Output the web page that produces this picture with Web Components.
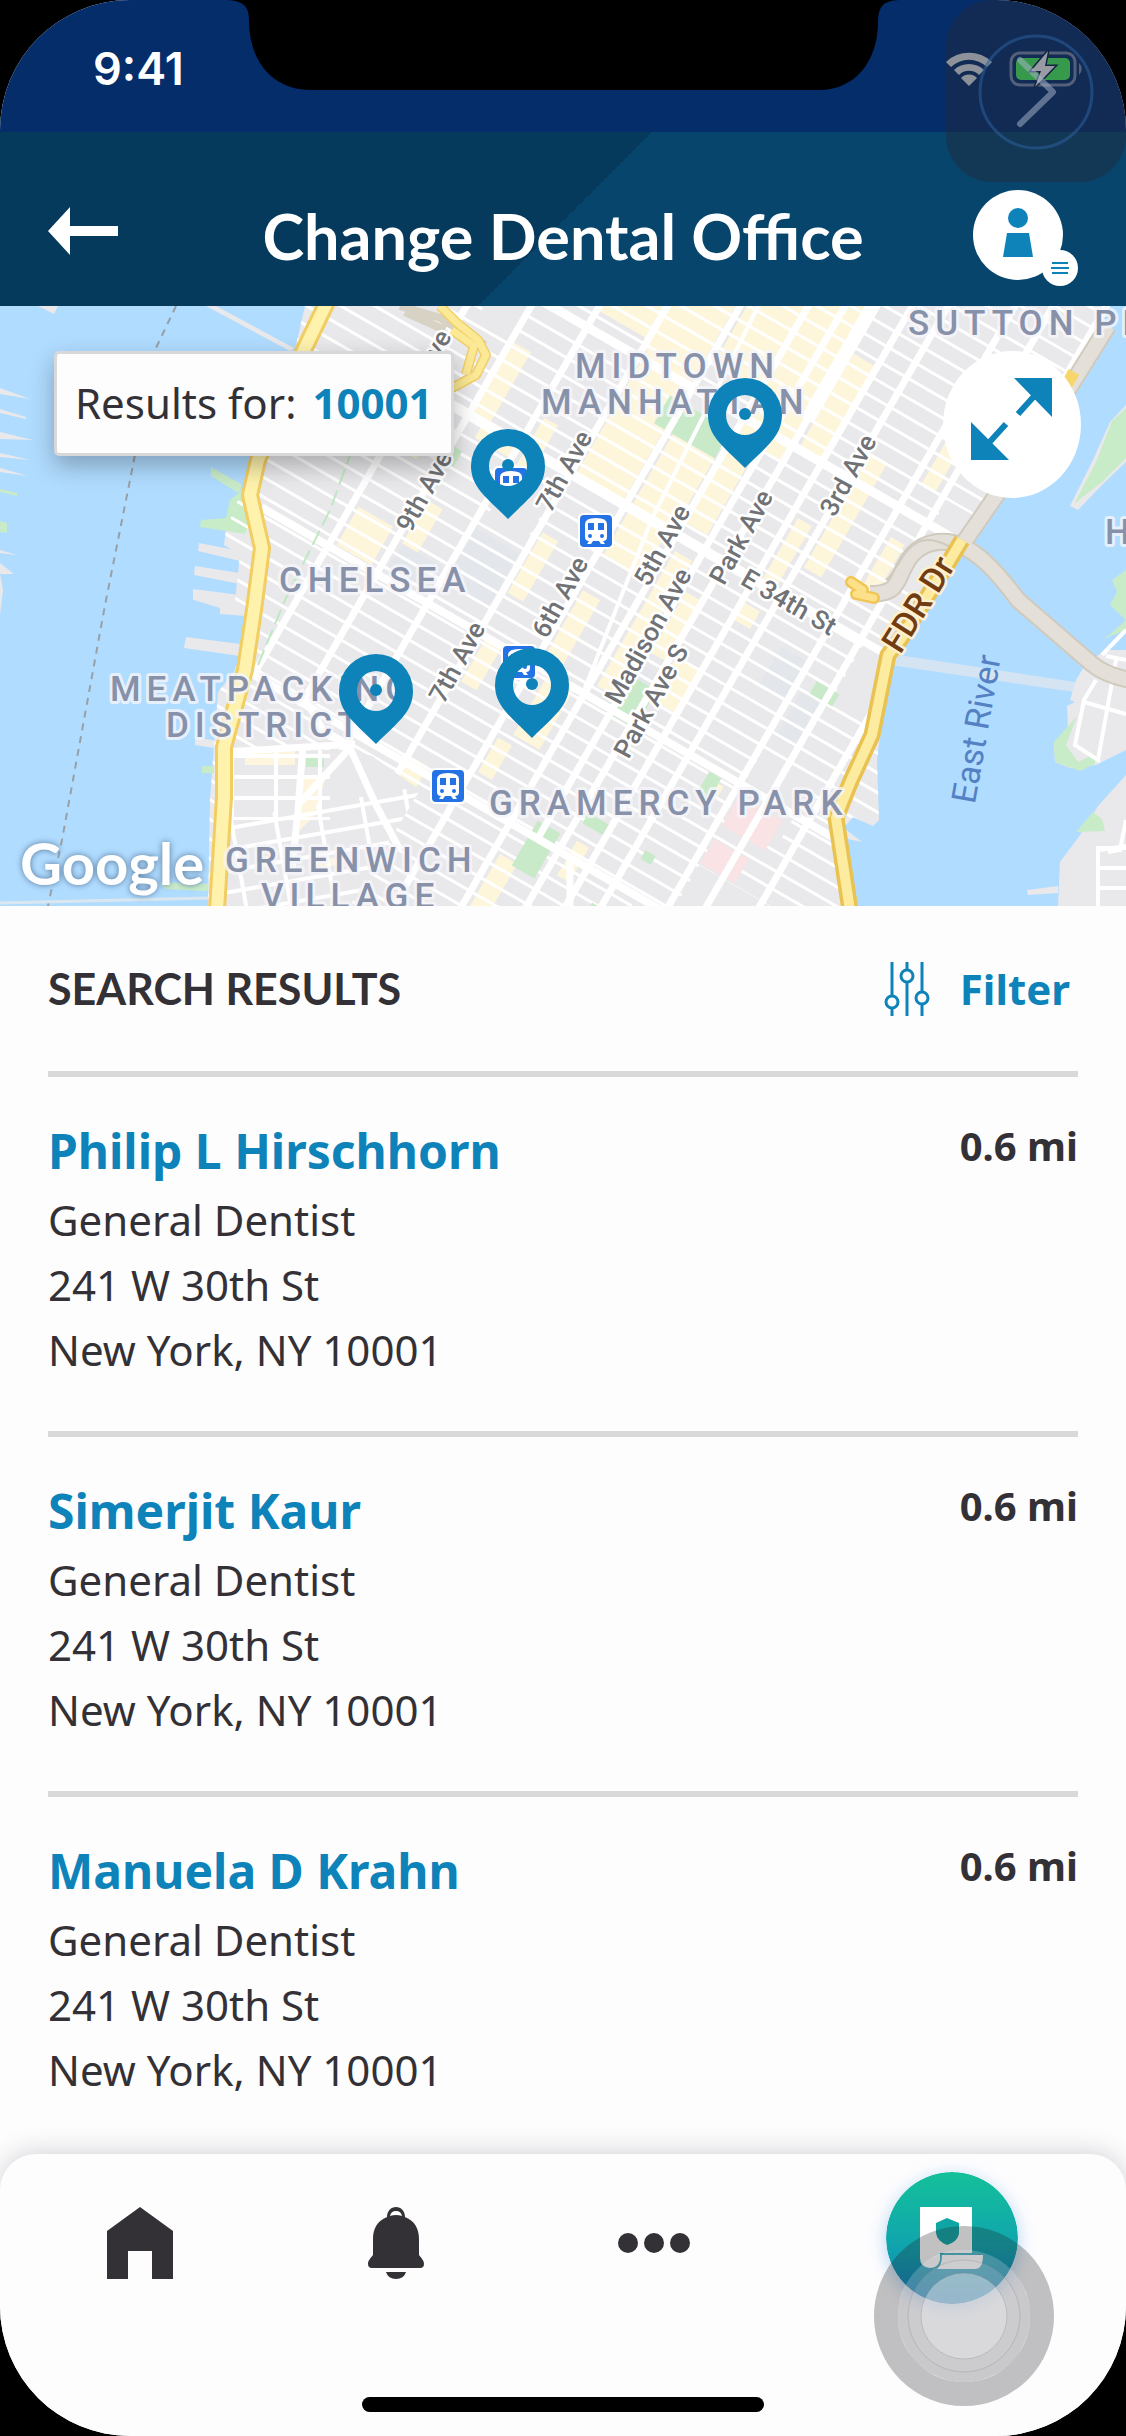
<!DOCTYPE html>
<html lang="en">
<head>
<meta charset="utf-8">
<meta name="viewport" content="width=device-width, initial-scale=1">
<title>Change Dental Office</title>
<style>
  html, body { margin: 0; background: #000; }
  body { font-family: "Noto Sans", "Open Sans", sans-serif; color: #333135; }
</style>
</head>
<body>
<dental-app>
  <status-bar slot="top" time="9:41"></status-bar>
  <page-header slot="top">Change Dental Office</page-header>
  <office-map slot="top" zip="10001"></office-map>
  <results-list>
    <span slot="title">SEARCH RESULTS</span>
    <dentist-item distance="0.6 mi"><span slot="name">Philip L Hirschhorn</span><span slot="role">General Dentist</span><span slot="street">241 W 30th St</span><span slot="city">New York, NY 10001</span></dentist-item>
    <dentist-item distance="0.6 mi"><span slot="name">Simerjit Kaur</span><span slot="role">General Dentist</span><span slot="street">241 W 30th St</span><span slot="city">New York, NY 10001</span></dentist-item>
    <dentist-item distance="0.6 mi"><span slot="name">Manuela D Krahn</span><span slot="role">General Dentist</span><span slot="street">241 W 30th St</span><span slot="city">New York, NY 10001</span></dentist-item>
  </results-list>
  <tab-bar slot="bottom"></tab-bar>
</dental-app>
<script>
const define = (name, render) => customElements.define(name, class extends HTMLElement {
  constructor() {
    super();
    this.attachShadow({ mode: 'open' }).innerHTML = render(this);
  }
});

define('dental-app', () => `
<style>
  :host { display: flex; flex-direction: column; position: relative; min-height: 100vh; background: #fefdfe; border-radius: 130px; overflow: hidden; }
  main { flex: 1; }
  .assist { position: absolute; top: 0; right: 0; width: 180px; height: 182px; }
</style>
<slot name="top"></slot>
<main><slot></slot></main>
<slot name="bottom"></slot>
<svg class="assist" viewBox="0 0 180 182" aria-hidden="true">
  <rect width="180" height="182" rx="46" fill="#222a38" fill-opacity=".44"/>
  <circle cx="90" cy="92" r="56" fill="none" stroke="#2c5f9a" stroke-opacity=".55" stroke-width="3"/>
  <path d="M74 60L107 92L74 124" fill="none" stroke="#a9b4cb" stroke-opacity=".52" stroke-width="6" stroke-linecap="round" stroke-linejoin="round"/>
</svg>`);

define('status-bar', el => `
<style>
  :host { display: flex; justify-content: space-between; align-items: flex-start; position: relative; height: 132px; background: #042d6a; color: #fff; font: 600 45px/56px Inter, sans-serif; }
  time { padding: 41px 0 0 93px; }
  .notch { position: absolute; left: 50%; top: 0; width: 672px; height: 90px; transform: translateX(-50%); }
  .signals { padding: 50px 40px 0 0; }
</style>
<time>${el.getAttribute('time')}</time>
<svg class="notch" viewBox="0 0 672 90" aria-hidden="true"><path d="M0 0C16 1 22 6 22 20C22 62 46 90 84 90H592C628 90 650 62 651 24C651 6 656 1 672 0Z"/></svg>
<svg class="signals" width="140" height="38" viewBox="0 0 140 38" aria-hidden="true">
  <g fill="#dfe3e6"><path d="M0 12A33 33 0 0 1 46 12L41 17A26 26 0 0 0 5 17Z"/><path d="M8 20A22 22 0 0 1 38 20L33 25A14 14 0 0 0 13 25Z"/><path d="M15 28A11 11 0 0 1 31 28L23 36Z"/></g>
  <rect x="65" y="3" width="64" height="32" rx="9" fill="none" stroke="#7b8cab" stroke-width="3"/>
  <path d="M133 13a8 8 0 0 1 0 12z" fill="#7b8cab"/>
  <rect x="70" y="8" width="54" height="22" rx="5" fill="#48f05a"/>
  <path d="M102 1L85 21H95L89 37L109 16H99Z" fill="#f4f4f4" stroke="#04204f" stroke-width="3" paint-order="stroke"/>
</svg>`);

define('page-header', () => `
<style>
  :host { display: grid; grid-template-columns: 118px 1fr 118px; align-items: center; height: 174px; box-sizing: border-box; padding: 0 48px; background: linear-gradient(135deg, transparent 0 50%, #07456c 50%) 479px 0 / 172px 174px no-repeat, linear-gradient(90deg, #053a5c 0 650px, #07456c 650px); color: #fff; }
  h1 { margin: 0; padding-top: 34px; text-align: center; font: 700 63px/72px Lato, sans-serif; white-space: nowrap; }
  button { border: 0; padding: 0; background: none; color: inherit; display: block; }
  .back { margin-top: 23px; }
  .profile { justify-self: end; margin-top: 38px; }
  svg { display: block; }
</style>
<button class="back" aria-label="Back"><svg width="70" height="48" viewBox="0 0 70 48"><path d="M0 24L22 0V19H70V29H22V48Z" fill="#fff"/></svg></button>
<h1><slot></slot></h1>
<button class="profile" aria-label="Profile menu"><svg width="105" height="96" viewBox="0 0 105 96">
  <circle cx="45" cy="45" r="45" fill="#fff"/><circle cx="87" cy="78" r="18" fill="#fff"/>
  <circle cx="45" cy="28" r="10" fill="#0d83b9"/><path d="M34 43H56L60 67H30Z" fill="#0d83b9"/>
  <path d="M79 73H95M78 78H96M79 83H95" stroke="#0d83b9" stroke-width="2"/>
</svg></button>`);

const avenues = [257, 313, 372, 431, 494, 553, 585, 609, 643, 674, 732, 765, 811]
  .map(u => `<path d="M${u} -900V-62"/>`).join('');
const lowerAvenues = [372, 431, 494, 553, 609, 643, 674, 732]
  .map(u => `<path d="M${u} -70V200"/>`).join('');
const shop = [[430,-640,60,100],[500,-700,52,140],[556,-700,50,190],[436,-540,54,150],[500,-480,48,90],[372,-620,56,70],[556,-500,24,90],[500,-400,44,60],[616,-640,26,110],[680,-560,20,130],[650,-470,16,70],[740,-500,16,60],[740,-660,16,100],[316,-480,20,80],[330,-400,40,22],[262,-400,28,70],[320,-300,18,60],[264,-260,40,44],[380,-430,16,60],[436,-330,18,70],[500,-300,20,80],[560,-380,20,150],[512,-210,30,70],[440,-210,18,50],[560,-240,30,16],[500,-130,16,40],[590,-350,20,70],[614,-290,26,50],[646,-370,18,20],[620,-80,14,40],[560,-30,20,60],[434,-70,20,40],[700,-200,20,14]]
  .map(([x, y, w, h]) => `<rect x="${x}" y="${y}" width="${w}" height="${h}"/>`).join('');
const crossStreets = Array.from({ length: 66 }, (_, i) => `<path d="M100 ${-901 + i * 17}H1100"/>`).join('');
const pin = (x, y) => `<g transform="translate(${x} ${y})" fill="#0d83b9"><path fill-rule="evenodd" d="M0 0A37 37 0 0 1 37 37C37 58 22 68 0 90C-22 68 -37 58 -37 37A37 37 0 0 1 0 0ZM0 17A19 20 0 1 0 0 57A19 20 0 1 0 0 17Z"/><circle cy="36" r="6"/></g>`;
const train = (x, y) => `<g transform="translate(${x} ${y})"><rect x="-18" y="-18" width="36" height="36" rx="5" fill="#fff"/><rect x="-16" y="-16" width="32" height="32" rx="4" fill="#2472e4"/><path d="M-11 -7Q-11 -13 0 -13Q11 -13 11 -7V6Q11 10 7 10L9 13H5L3 10H-3L-5 13H-9L-7 10Q-11 10 -11 6Z" fill="#fff"/><path d="M-8 -8H-2V-1H-8ZM2 -8H8V-1H2Z" fill="#2472e4"/><circle cx="-6" cy="5" r="2" fill="#2472e4"/><circle cx="6" cy="5" r="2" fill="#2472e4"/></g>`;
const road = (x, y, a, t) => `<text transform="translate(${x} ${y}) rotate(${a})" dy="9">${t}</text>`;

define('office-map', el => `
<style>
  :host { display: block; position: relative; height: 600px; overflow: hidden; }
  .map { display: block; width: 100%; height: 100%; }
  .area { font: 500 35px Roboto, sans-serif; letter-spacing: 6px; fill: #8791a9; stroke: #f6f6fb; stroke-opacity: .8; stroke-width: 6px; stroke-linejoin: round; paint-order: stroke; }
  .road { font: 500 26px Roboto, sans-serif; fill: #707276; text-anchor: middle; stroke: #fff; stroke-width: 5px; stroke-linejoin: round; paint-order: stroke; }
  .logo { font: 700 58px Lato, sans-serif; fill: #fff; filter: drop-shadow(0 0 3px #56779a); }
  .query { position: absolute; left: 54px; top: 45px; display: flex; gap: 16px; box-sizing: border-box; height: 105px; padding: 19px 18px 20px; border: 3px solid #d8d7d9; border-radius: 5px; background: #fefdfe; box-shadow: 0 10px 24px rgba(0,0,0,.28); font-size: 42px; line-height: 60px; white-space: nowrap; }
  .query strong { color: #0d83b9; }
  button { position: absolute; right: 45px; top: 45px; width: 138px; height: 147px; padding: 0; border: 0; border-radius: 50%; background: #fff; }
  button svg { display: block; }
</style>
<svg class="map" viewBox="0 306 1126 600" preserveAspectRatio="xMidYMid slice" role="img" aria-label="Map of dental offices near ${el.getAttribute('zip')}">
  <defs>
    <clipPath id="land"><path d="M305 306L296 345L250 460L244 492L238 500L226 530L224 545L240 555L234 610L246 617L242 650L234 672L218 692L214 745L210 800L208 906H858L842 830L853 817L873 826L879 820L877 760L888 672L897 655L930 600L962 545L1000 490L1073 385L1110 306Z"/></clipPath>
    <clipPath id="village"><path d="M225 750H350L372 756L420 790L350 906H205L220 800Z"/></clipPath>
    <pattern id="lanes" width="44" height="21" patternUnits="userSpaceOnUse"><path d="M0 2H44M2 0V21" stroke="#fff" stroke-width="4"/></pattern>
  </defs>
  <rect y="306" width="1126" height="600" fill="#b0dcff"/>
  <g fill="#e9e8eb">
    <path d="M305 306L296 345L250 460L244 492L238 500L226 530L224 545L240 555L234 610L246 617L242 650L234 672L218 692L214 745L210 800L208 906H858L842 830L853 817L873 826L879 820L877 760L888 672L897 655L930 600L962 545L1000 490L1073 385L1110 306Z"/>
    <path d="M199 543L240 551V561L198 551ZM195 566L240 573V584L194 575ZM193 589L240 595V606L193 600ZM194 600L246 602V616L220 614V608ZM186 637L240 644V656L184 648ZM195 738L214 740V748L195 745ZM844 828L862 842L843 838Z"/>
    <path d="M0 388L30 399L0 394ZM0 409L26 417V419L0 413ZM0 432L33 440L0 439ZM0 453L30 460L0 457ZM0 468L28 476L0 472ZM0 550L17 555L0 553ZM0 563L14 574H0ZM0 574L3 590L0 615ZM38 306H58L54 314Z"/>
    <path d="M206 306H216L294 348L290 351Z"/>
    <path d="M1126 650H1105L1085 665L1076 680L1070 700L1075 702L1067 706L1068 730L1054 745L1055 762L1070 768L1096 765L1126 750ZM1126 775L1098 806L1080 835L1060 862L1058 906H1126ZM1058 886L1027 890L1028 895L1058 893Z"/>
    <path d="M1126 405L1110 422L1092 462L1070 506L1078 510L1103 484L1126 462Z"/>
    <path d="M892 654L1075 682L1074 692L890 665Z" opacity=".65"/>
  </g>
  <g fill="#c9ecc8">
    <path d="M211 467L241 484L240 494L211 476ZM242 490L230 500L226 518L201 520L200 527L245 534L250 520ZM0 489L17 493V496L0 492ZM0 521L7 523V533L0 532ZM202 766H214V773H202ZM160 882L210 884L207 891L165 889Z"/>
    <path d="M1126 408L1112 421L1096 462L1074 504L1103 481L1126 458ZM1126 570L1112 580L1117 592L1110 605L1126 620L1108 636L1100 640L1126 630ZM1077 716L1054 742L1055 762L1080 771L1095 764V754L1078 762L1066 745ZM1093 812L1076 832L1105 831L1102 819Z"/>
  </g>
  <g fill="none" stroke="#fff" stroke-width="4"><path d="M1126 660L1106 656M1126 630L1102 655M1096 680L1084 700L1075 745L1098 760L1116 660M1084 702L1126 714M1126 848H1098V906M1100 868H1126M1100 888H1126M1100 850L1126 846M1126 820L1120 850L1108 852"/></g>
  <g clip-path="url(#land)">
    <g transform="translate(0 600) rotate(30)">
      <g fill="#fef6db">${shop}</g>
      <g fill="#e3e6ea"><rect x="740" y="-320" width="24" height="50"/><rect x="592" y="-265" width="18" height="40"/><rect x="700" y="-350" width="30" height="45"/><rect x="320" y="-250" width="50" height="30"/><rect x="376" y="-300" width="50" height="60"/></g>
      <g stroke="#fff" stroke-width="3">${crossStreets}</g>
      <g fill="#e9e8eb"><rect x="272" y="-560" width="38" height="70"/><rect x="380" y="-360" width="46" height="44"/><rect x="770" y="-400" width="60" height="70"/><rect x="736" y="-240" width="60" height="60"/><rect x="770" y="-560" width="60" height="90"/><rect x="738" y="-120" width="150" height="46"/><rect x="700" y="-56" width="170" height="160"/></g>
      <g fill="#f9e3e5"><rect x="738" y="-200" width="50" height="34"/><rect x="738" y="-150" width="40" height="28"/><rect x="694" y="-6" width="24" height="14"/></g>
      <g fill="#c9eac9"><rect x="478" y="-512" width="70" height="32"/><rect x="290" y="-360" width="36" height="18"/><rect x="588" y="-250" width="26" height="44"/><rect x="700" y="-206" width="14" height="26"/><rect x="616" y="-110" width="24" height="12"/><rect x="748" y="-338" width="26" height="14"/><rect x="576" y="-78" width="26" height="52"/><rect x="664" y="-34" width="12" height="28"/><rect x="680" y="-32" width="14" height="30"/><rect x="684" y="-106" width="12" height="10"/></g>
      <g fill="none" stroke="#fff" stroke-width="7">${avenues}${lowerAvenues}
        <path d="M260 -530H900" stroke-width="9"/><path d="M200 -396H960" stroke-width="8"/><path d="M180 -211H900" stroke-width="8"/><path d="M250 -62H900" stroke-width="8"/>
        <path d="M609 -900V-560" stroke-width="14"/><path d="M494 -900L524 -396L553 -200" stroke-width="4"/></g>
    </g>
    <path d="M225 750H350L372 756L420 790L350 906H205L220 800Z" fill="#e9e8eb"/>
    <path d="M245 748H295V765H245ZM298 774L325 780L315 815L300 830ZM305 855L350 860L320 870Z" fill="#fdf5dd"/>
    <path d="M306 754H324V767H306Z" fill="#c9eac9"/>
    <g clip-path="url(#village)"><g transform="translate(230 754)"><rect x="-30" y="-10" width="130" height="76" fill="url(#lanes)"/></g><g transform="translate(230 826) rotate(-10)"><rect x="-40" y="-6" width="240" height="100" fill="url(#lanes)"/></g></g>
    <g fill="none" stroke="#fff" stroke-width="7"><path d="M303 745L298 810L292 870M350 748L298 805M350 748L376 805L400 850M225 752L355 744M570 860V906M352 745L326 735L300 690"/></g>
    <path d="M258 665L285 600L330 510L352 450" fill="none" stroke="#bfe9c0" stroke-width="2" stroke-dasharray="16 6"/>
  </g>
  <path d="M400 306L440 318L485 345M405 312L445 330" fill="none" stroke="#d8d2c4" stroke-width="8"/>
  <g fill="none" stroke-linejoin="round">
    <path d="M440 306L456 322L478 340L486 355L476 375L452 388M452 330L474 346L466 374" stroke="#f2cf68" stroke-width="10"/><path d="M440 306L456 322L478 340L486 355L476 375L452 388M452 330L474 346L466 374" stroke="#fbe995" stroke-width="7"/>
    <path d="M328 300L303 352L258 460L250 495L262 548L254 610L245 670L224 747V797L217 910" stroke="#f1cd62" stroke-width="18"/><path d="M328 300L303 352L258 460L250 495L262 548L254 610L245 670L224 747V797L217 910" stroke="#fef2ad" stroke-width="12"/>
    <path d="M1108 326L1068 390L1000 490L960 548M870 594C900 594 896 580 906 564C914 548 930 540 948 542C976 546 1000 576 1018 600L1092 664Q1105 675 1130 680" stroke="#d0cabd" stroke-width="18"/><path d="M1108 326L1068 390L1000 490L960 548M870 594C900 594 896 580 906 564C914 548 930 540 948 542C976 546 1000 576 1018 600L1092 664Q1105 675 1130 680" stroke="#e4e0d9" stroke-width="14"/>
    <path d="M886 580C898 570 902 550 918 542Q932 536 952 548" stroke="#d0cabd" stroke-width="2"/>
    <path d="M962 540L950 560L900 640L888 655L872 735L850 783L836 818L850 910" stroke="#e9c252" stroke-width="17"/><path d="M962 540L950 560L900 640L888 655L872 735L850 783L836 818L850 910" stroke="#fdeb9f" stroke-width="10"/>
    <path d="M851 582L863 590M856 594L874 598" stroke="#f0c552" stroke-width="12" stroke-linecap="round"/><path d="M851 582L863 590M856 594L874 598" stroke="#fde08a" stroke-width="7" stroke-linecap="round"/>
    <path d="M1074 372L1066 386" stroke="#f8d66e" stroke-width="12"/>
    <path d="M176 306L155 350L133 465L105 605L62 840L48 906" stroke="#99a0a5" stroke-width="2" stroke-dasharray="7 6"/>
    <path d="M0 903L208 898" stroke="#dbe7f0" stroke-width="3"/>
  </g>
  <g class="area">
    <text x="908" y="335">SUTTON PL</text><text x="575" y="378">MIDTOWN</text><text x="541" y="414">MANHATTAN</text><text x="279" y="592">CHELSEA</text>
    <text x="110" y="701">MEATPACKING</text><text x="166" y="737">DISTRICT</text><text x="489" y="815">GRAMERCY PARK</text><text x="225" y="872">GREENWICH</text><text x="261" y="908">VILLAGE</text><text x="1105" y="544">H</text>
  </g>
  <g class="road">
    ${road(434, 351, -61, 'Ave')}${road(424, 491, -61, '9th Ave')}${road(564, 471, -61, '7th Ave')}${road(560, 597, -61, '6th Ave')}${road(662, 545, -61, '5th Ave')}${road(741, 537, -61, 'Park Ave')}${road(848, 475, -61, '3rd Ave')}${road(648, 636, -61, 'Madison Ave')}${road(651, 701, -61, 'Park Ave S')}${road(457, 662, -61, '7th Ave')}${road(789, 602, 30, 'E 34th St')}${road(706, 928, -61, 'Ave')}
    <text transform="translate(918 604) rotate(-58)" dy="12" style="font-size:34px;fill:#713c12;stroke:#fdf0d0">FDR Dr</text>
    <text transform="translate(977 729) rotate(-80)" dy="11" style="font-size:34px;font-weight:400;fill:#5480c4;stroke:none">East River</text>
  </g>
  <text class="logo" x="20" y="885">Google</text>
  ${train(596, 531)}${train(448, 786)}${train(519, 662)}${train(511, 484)}
  ${pin(508, 429)}${pin(745, 378)}${pin(376, 654)}${pin(532, 648)}
</svg>
<div class="query"><span>Results for:</span><strong>${el.getAttribute('zip')}</strong></div>
<button aria-label="Expand map"><svg width="138" height="147" viewBox="0 0 138 147"><g fill="#0d83b9"><path d="M71 27H109V66ZM28 71V109H66Z"/></g><path d="M75 63L94 42M63 73L43 95" stroke="#0d83b9" stroke-width="6"/></svg></button>`);

define('results-list', () => `
<style>
  :host { display: block; padding: 0 48px; }
  header { display: flex; justify-content: space-between; align-items: center; height: 165px; }
  h2 { margin: 0; font: 700 43px/60px Lato, sans-serif; }
  button { display: flex; align-items: center; gap: 30px; padding: 0 8px 0 0; border: 0; background: none; color: #0d83b9; font: 700 42px/60px "Noto Sans", sans-serif; }
</style>
<header><h2><slot name="title"></slot></h2>
<button><svg width="46" height="54" viewBox="0 0 46 54" fill="none" stroke="#0d83b9" stroke-width="3" aria-hidden="true"><path d="M8 0V33M8 47V54M23 0V7M23 21V54M38 0V29M38 43V54"/><circle cx="8" cy="40" r="6"/><circle cx="23" cy="14" r="6"/><circle cx="38" cy="36" r="6"/></svg>Filter</button></header>
<slot></slot>`);

define('dentist-item', el => `
<style>
  :host { display: flex; justify-content: space-between; align-items: flex-start; border-top: 6px solid #d9d9da; padding: 38px 0 49px; font-size: 42px; line-height: 65px; }
  a { display: block; color: #0d83b9; font-weight: 700; font-size: 48px; line-height: 72px; text-decoration: none; }
  address { font-style: normal; }
  address div { white-space: nowrap; }
  .distance { font-size: 40px; line-height: 61px; font-weight: 700; }
</style>
<article><a href="#"><slot name="name"></slot></a><address><div><slot name="role"></slot></div><div><slot name="street"></slot></div><div><slot name="city"></slot></div></address></article>
<div class="distance">${el.getAttribute('distance')}</div>`);

define('tab-bar', () => `
<style>
  :host { display: block; position: relative; height: 282px; background: #fefdfe; border-radius: 36px 36px 0 0; box-shadow: 0 -2px 26px rgba(40,35,45,.2); }
  nav { display: grid; grid-template-columns: 256fr 256fr 260fr 336fr; align-items: center; height: 178px; padding: 0 6px 0 12px; }
  a { display: flex; justify-content: center; }
  svg { display: block; }
  .plan { margin-bottom: 10px; border-radius: 50%; box-shadow: 0 4px 18px rgba(40,140,220,.35); }
  .home { position: absolute; bottom: 24px; left: 50%; width: 402px; height: 15px; transform: translateX(-50%); border-radius: 8px; background: #000; }
  .touch { position: absolute; right: 72px; bottom: 30px; }
</style>
<nav>
  <a href="#" aria-label="Home"><svg width="66" height="72" viewBox="0 0 66 72"><path d="M33 0L66 24V72H45V44H21V72H0V24Z" fill="#333135"/></svg></a>
  <a href="#" aria-label="Notifications"><svg width="56" height="72" viewBox="0 0 56 72" fill="#333135"><path fill-rule="evenodd" d="M19 10C19 4 23 0 28 0S37 4 37 10C47 14 51 22 51 32V48C53 51 56 53 56 57Q56 61 52 61H4Q0 61 0 57C0 53 3 51 5 48V32C5 22 9 14 19 10ZM22 9Q28 7 34 9Q33 4 28 4T22 9Z"/><path d="M18 65H38Q36 72 28 72T18 65Z"/></svg></a>
  <a href="#" aria-label="More"><svg width="72" height="20" viewBox="0 0 72 20" fill="#333135"><circle cx="10" cy="10" r="10"/><circle cx="36" cy="10" r="10"/><circle cx="62" cy="10" r="10"/></svg></a>
  <a href="#" aria-label="My plan"><svg class="plan" width="132" height="132" viewBox="0 0 132 132"><defs><linearGradient id="g" x2="0" y2="1"><stop stop-color="#14c09a"/><stop offset=".55" stop-color="#10a5ad"/><stop offset="1" stop-color="#0d7fc0"/></linearGradient></defs><circle cx="66" cy="66" r="66" fill="url(#g)"/><path d="M34 35H86V81H54V88Q52 96 44 96Q34 95 34 86Z" fill="#fff"/><path d="M56 83H97Q97 97 89 97H51Q56 93 56 83Z" fill="#fff"/><path d="M61 46L73 51V62Q71 70 61 73Q51 69 50 61V51Z" fill="#10a5a5"/></svg></a>
</nav>
<div class="home"></div>
<svg class="touch" width="180" height="180" viewBox="0 0 180 180" aria-hidden="true">
  <circle cx="90" cy="90" r="78" fill="none" stroke="#222024" stroke-opacity=".28" stroke-width="24"/>
  <circle cx="90" cy="90" r="66" fill="#87868a" fill-opacity=".44"/>
  <circle cx="90" cy="90" r="56" fill="#e0dfe2" fill-opacity=".18" stroke="#77777b" stroke-opacity=".25"/>
  <circle cx="90" cy="90" r="43" fill="#eeeef0" fill-opacity=".4" stroke="#77777b" stroke-opacity=".25"/>
</svg>`);
</script>
</body>
</html>
